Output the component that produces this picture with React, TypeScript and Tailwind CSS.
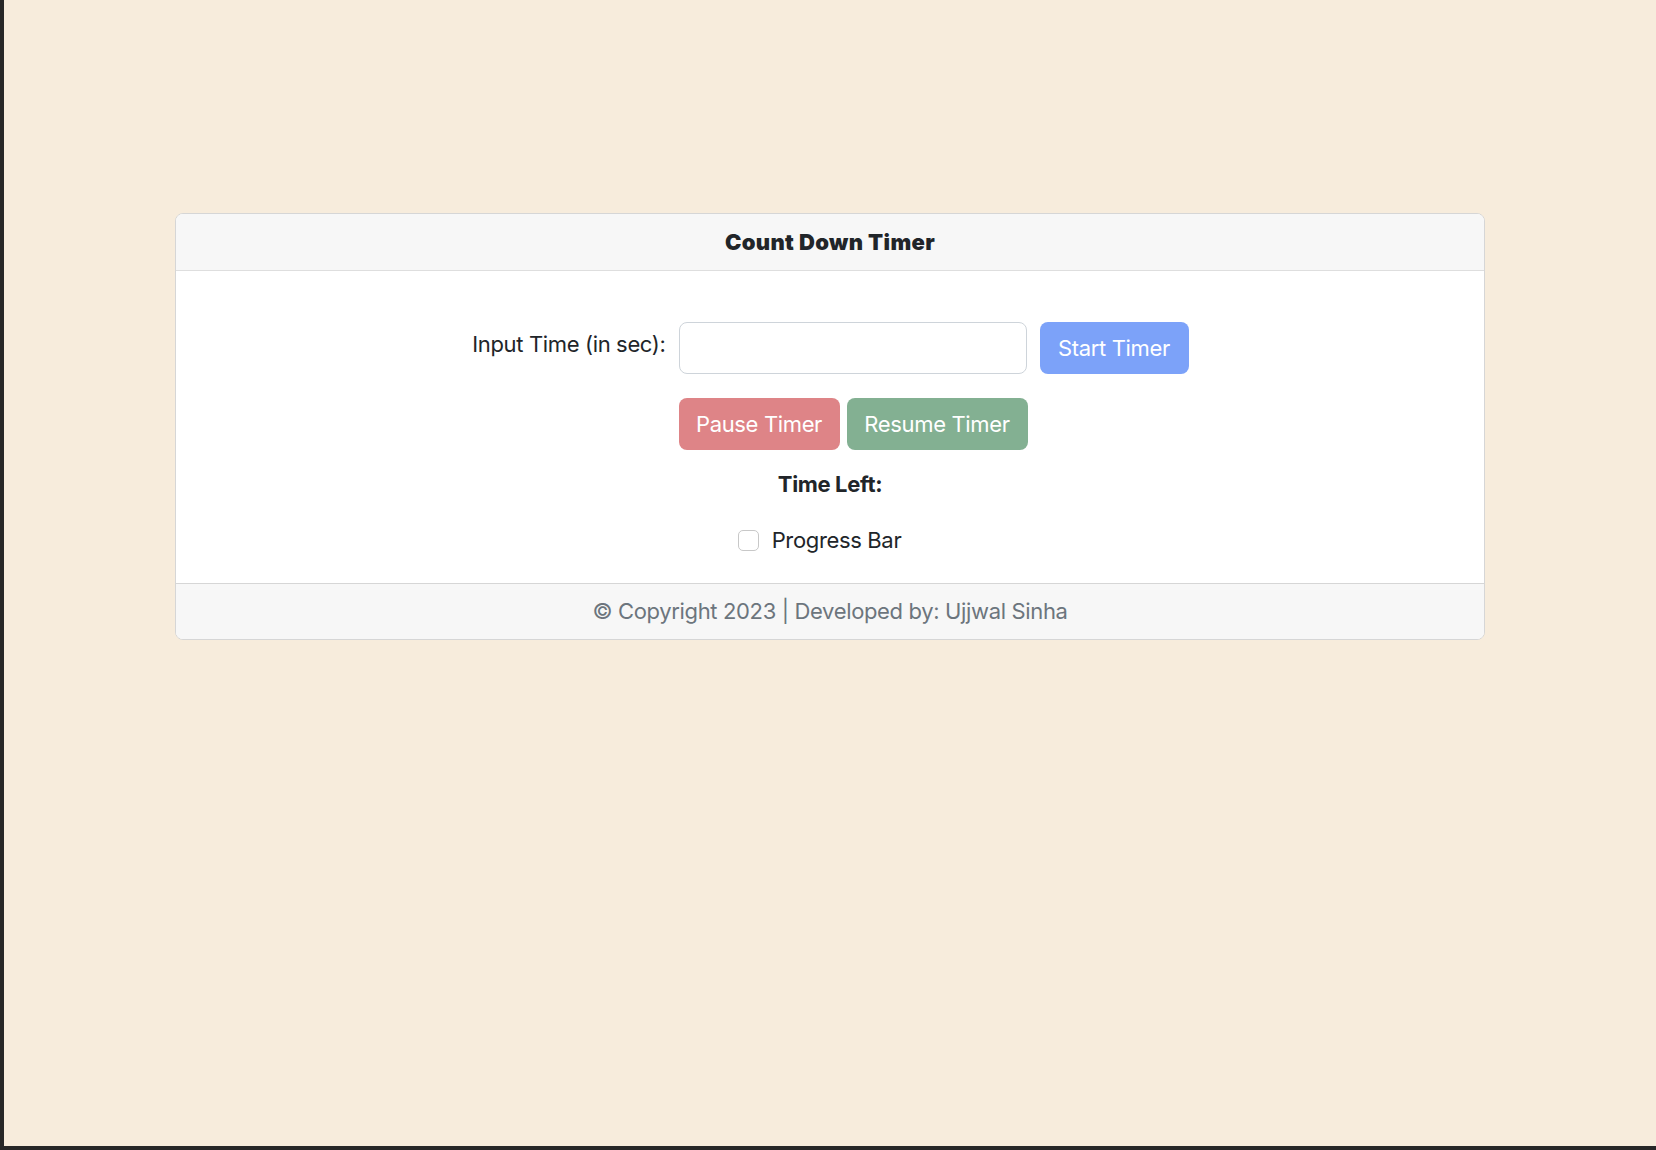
import React from "react";

export default function App() {
  return (
    <div
      className="min-h-[1150px] w-full bg-[#272727] pl-[4px] pb-[4px]"
      style={{ fontFamily: 'Inter, "Noto Sans", "Liberation Sans", sans-serif' }}
    >
      <div className="h-[1146px] bg-[#f7ecdc] pt-[213px]">
        <div className="mx-auto w-[1310px] overflow-hidden rounded-[8px] border border-[#d6d6d6] bg-white text-[#212529]">
          <div className="flex h-[57px] items-center justify-center border-b border-[#dedede] bg-[#f7f7f7]">
            <h5 className="text-[22px] font-black leading-[33px] tracking-[0.35px] text-[#212529]">
              Count Down Timer
            </h5>
          </div>

          <div className="flex h-[312px] flex-col pt-[51px] tracking-[-0.35px]">
            <div className="grid grid-cols-[194px_348px_149px] justify-center gap-x-[13px] gap-y-[24px]">
              <div className="flex justify-end self-start pt-[6px]">
                <label className="whitespace-nowrap text-[22px] leading-[33px]">
                  Input Time (in sec):
                </label>
              </div>
              <input
                type="number"
                className="h-[52px] w-[348px] rounded-[8px] border border-[#ced4da] bg-white px-[16px] text-[22px] outline-none"
              />
              <button className="h-[52px] w-[149px] whitespace-nowrap rounded-[8px] bg-[#7ca2f9] text-[22px] leading-[33px] text-white">
                Start Timer
              </button>

              <div className="col-start-2 flex gap-[7px]">
                <button className="h-[52px] w-[161px] shrink-0 whitespace-nowrap rounded-[8px] bg-[#de8487] text-[22px] leading-[33px] text-white">
                  Pause Timer
                </button>
                <button className="h-[52px] w-[181px] shrink-0 whitespace-nowrap rounded-[8px] bg-[#83b092] text-[22px] leading-[33px] text-white">
                  Resume Timer
                </button>
              </div>
            </div>

            <div className="mt-[18px] text-center text-[22px] font-bold leading-[33px]">
              Time Left:
            </div>

            <div className="mt-[23px] flex items-center justify-center gap-[13px] pr-[21px]">
              <span className="inline-block h-[21px] w-[21px] rounded-[5px] border border-[#c8c8c8] bg-white" />
              <span className="text-[22px] leading-[33px]">Progress Bar</span>
            </div>
          </div>

          <div className="flex h-[56px] items-center justify-center border-t border-[#d6d6d6] bg-[#f7f7f7]">
            <span className="text-[22px] leading-[33px] tracking-[-0.35px] text-[#6c757d]">
              © Copyright 2023 | Developed by: Ujjwal Sinha
            </span>
          </div>
        </div>
      </div>
    </div>
  );
}
